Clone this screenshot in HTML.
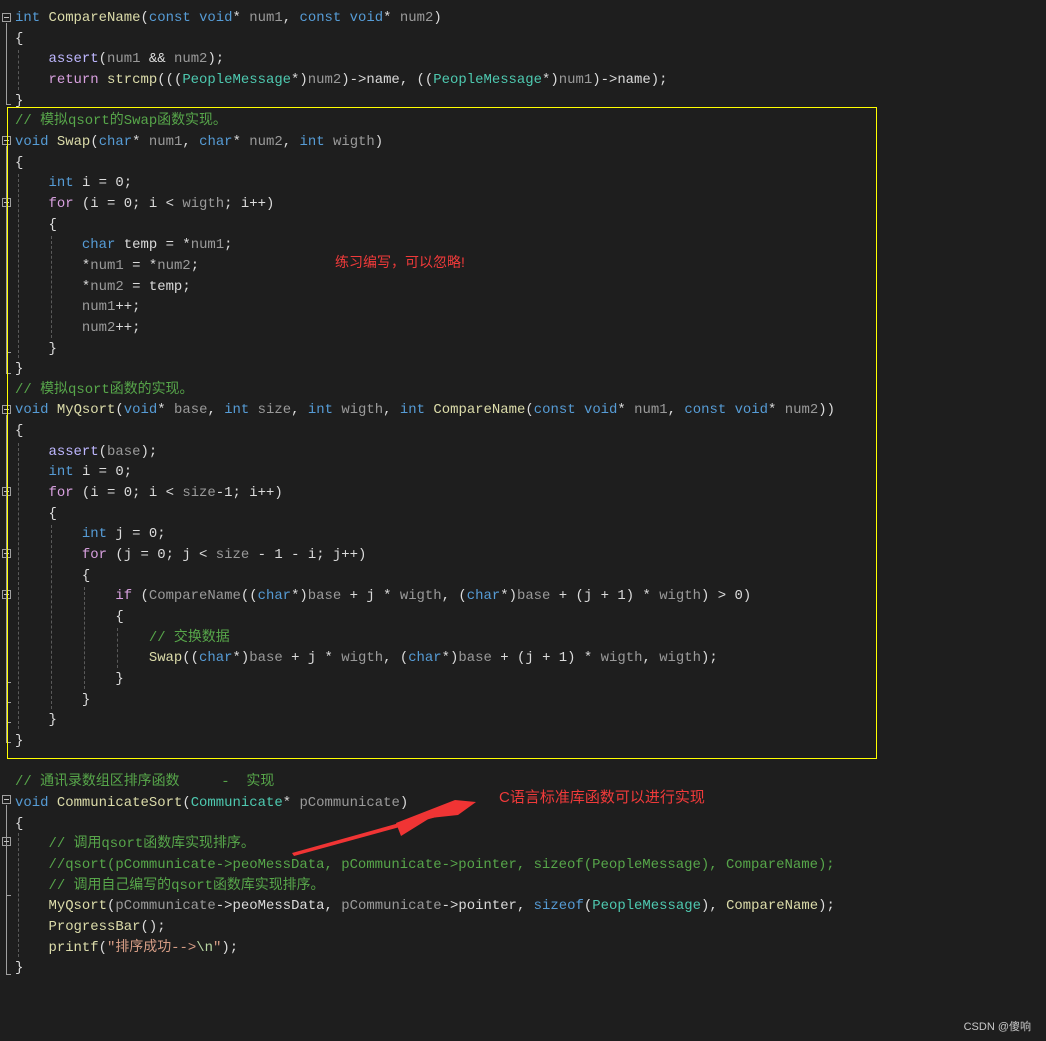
<!DOCTYPE html>
<html><head><meta charset="utf-8"><style>
html,body{margin:0;padding:0;background:#1e1e1e;width:1046px;height:1041px;overflow:hidden}
#code{position:absolute;left:15px;top:8px;margin:0;font-family:"Liberation Mono","Noto Sans CJK SC",monospace;font-size:13.95px;line-height:20.65px;color:#dcdcdc;white-space:pre}
.k{color:#569cd6}.f{color:#dcdcaa}.t{color:#4ec9b0}.p{color:#9a9a9a}.c{color:#57a64a}.s{color:#d69d85}.m{color:#dadada}.r{color:#d8a0df}.a{color:#beb7ff}.e{color:#b8d7a3}
.fb{position:absolute;left:2px;width:9px;height:9px;border:1px solid #a0a0a0;box-sizing:border-box}
.fb:after{content:"";position:absolute;left:1px;top:3px;width:5px;height:1px;background:#c0c0c0}
.vl{position:absolute;left:6px;width:1px;background:#a0a0a0}
.tk{position:absolute;left:6px;width:5px;height:1px;background:#a0a0a0}
.g{position:absolute;width:0;border-left:1px dashed #5a5a5a}
.y{position:absolute;background:#ffff00}
</style></head><body>
<pre id="code"><span class="k">int</span> <span class="f">CompareName</span>(<span class="k">const</span> <span class="k">void</span>* <span class="p">num1</span>, <span class="k">const</span> <span class="k">void</span>* <span class="p">num2</span>)
{
    <span class="a">assert</span>(<span class="p">num1</span> &amp;&amp; <span class="p">num2</span>);
    <span class="r">return</span> <span class="f">strcmp</span>(((<span class="t">PeopleMessage</span>*)<span class="p">num2</span>)-&gt;<span class="m">name</span>, ((<span class="t">PeopleMessage</span>*)<span class="p">num1</span>)-&gt;<span class="m">name</span>);
}
<span class="c">// 模拟qsort的Swap函数实现。</span>
<span class="k">void</span> <span class="f">Swap</span>(<span class="k">char</span>* <span class="p">num1</span>, <span class="k">char</span>* <span class="p">num2</span>, <span class="k">int</span> <span class="p">wigth</span>)
{
    <span class="k">int</span> <span class="m">i</span> = 0;
    <span class="r">for</span> (<span class="m">i</span> = 0; <span class="m">i</span> &lt; <span class="p">wigth</span>; <span class="m">i</span>++)
    {
        <span class="k">char</span> <span class="m">temp</span> = *<span class="p">num1</span>;
        *<span class="p">num1</span> = *<span class="p">num2</span>;
        *<span class="p">num2</span> = <span class="m">temp</span>;
        <span class="p">num1</span>++;
        <span class="p">num2</span>++;
    }
}
<span class="c">// 模拟qsort函数的实现。</span>
<span class="k">void</span> <span class="f">MyQsort</span>(<span class="k">void</span>* <span class="p">base</span>, <span class="k">int</span> <span class="p">size</span>, <span class="k">int</span> <span class="p">wigth</span>, <span class="k">int</span> <span class="f">CompareName</span>(<span class="k">const</span> <span class="k">void</span>* <span class="p">num1</span>, <span class="k">const</span> <span class="k">void</span>* <span class="p">num2</span>))
{
    <span class="a">assert</span>(<span class="p">base</span>);
    <span class="k">int</span> <span class="m">i</span> = 0;
    <span class="r">for</span> (<span class="m">i</span> = 0; <span class="m">i</span> &lt; <span class="p">size</span>-1; <span class="m">i</span>++)
    {
        <span class="k">int</span> <span class="m">j</span> = 0;
        <span class="r">for</span> (<span class="m">j</span> = 0; <span class="m">j</span> &lt; <span class="p">size</span> - 1 - <span class="m">i</span>; <span class="m">j</span>++)
        {
            <span class="r">if</span> (<span class="p">CompareName</span>((<span class="k">char</span>*)<span class="p">base</span> + <span class="m">j</span> * <span class="p">wigth</span>, (<span class="k">char</span>*)<span class="p">base</span> + (<span class="m">j</span> + 1) * <span class="p">wigth</span>) &gt; 0)
            {
                <span class="c">// 交换数据</span>
                <span class="f">Swap</span>((<span class="k">char</span>*)<span class="p">base</span> + <span class="m">j</span> * <span class="p">wigth</span>, (<span class="k">char</span>*)<span class="p">base</span> + (<span class="m">j</span> + 1) * <span class="p">wigth</span>, <span class="p">wigth</span>);
            }
        }
    }
}

<span class="c">// 通讯录数组区排序函数     -  实现</span>
<span class="k">void</span> <span class="f">CommunicateSort</span>(<span class="t">Communicate</span>* <span class="p">pCommunicate</span>)
{
    <span class="c">// 调用qsort函数库实现排序。</span>
    <span class="c">//qsort(pCommunicate-&gt;peoMessData, pCommunicate-&gt;pointer, sizeof(PeopleMessage), CompareName);</span>
    <span class="c">// 调用自己编写的qsort函数库实现排序。</span>
    <span class="f">MyQsort</span>(<span class="p">pCommunicate</span>-&gt;<span class="m">peoMessData</span>, <span class="p">pCommunicate</span>-&gt;<span class="m">pointer</span>, <span class="k">sizeof</span>(<span class="t">PeopleMessage</span>), <span class="f">CompareName</span>);
    <span class="f">ProgressBar</span>();
    <span class="f">printf</span>(<span class="s">"排序成功--&gt;</span><span class="e">\n</span><span class="s">"</span>);
}</pre>

<div class="fb" style="top:13px"></div><div class="vl" style="top:23px;height:82px"></div><div class="tk" style="top:104px"></div>
<div class="fb" style="top:136px"></div><div class="vl" style="top:146px;height:228px"></div><div class="tk" style="top:373px"></div>
<div class="fb" style="top:198px"></div><div class="tk" style="top:352px"></div>
<div class="fb" style="top:405px"></div><div class="vl" style="top:415px;height:328px"></div><div class="tk" style="top:742px"></div>
<div class="fb" style="top:487px"></div><div class="tk" style="top:722px"></div>
<div class="fb" style="top:549px"></div><div class="tk" style="top:702px"></div>
<div class="fb" style="top:590px"></div><div class="tk" style="top:682px"></div>
<div class="fb" style="top:795px"></div><div class="vl" style="top:805px;height:170px"></div><div class="tk" style="top:974px"></div>
<div class="fb" style="top:837px"></div><div class="tk" style="top:895px"></div>

<div class="g" style="left:18px;top:50px;height:40px"></div>
<div class="g" style="left:18px;top:174px;height:184px"></div>
<div class="g" style="left:51px;top:236px;height:102px"></div>
<div class="g" style="left:18px;top:443px;height:286px"></div>
<div class="g" style="left:51px;top:525px;height:184px"></div>
<div class="g" style="left:84px;top:587px;height:102px"></div>
<div class="g" style="left:117px;top:628px;height:40px"></div>
<div class="g" style="left:18px;top:833px;height:124px"></div>

<div class="y" style="left:7px;top:107px;width:870px;height:1px"></div>
<div class="y" style="left:7px;top:758px;width:870px;height:1px"></div>
<div class="y" style="left:7px;top:107px;width:1px;height:652px"></div>
<div class="y" style="left:876px;top:107px;width:1px;height:652px"></div>

<div style="position:absolute;left:335px;top:252px;color:#f03a3a;font-family:'Liberation Sans','Noto Sans CJK SC',sans-serif;font-size:14px">练习编写，可以忽略!</div>
<div style="position:absolute;left:499px;top:786px;color:#f03a3a;font-family:'Liberation Sans','Noto Sans CJK SC',sans-serif;font-size:15px">C语言标准库函数可以进行实现</div>

<svg style="position:absolute;left:0;top:0" width="1046" height="1041">
<polygon points="292,853 460,806 462,810 294,856" fill="#f03434"/>
<polygon points="476,802 455,800 396,823 401,836 430,818 458,815" fill="#f03434"/>
</svg>

<div style="position:absolute;right:15px;top:1018px;color:#c8c8c8;font-family:'Liberation Sans','Noto Sans CJK SC',sans-serif;font-size:11px">CSDN @傻响</div>
</body></html>
